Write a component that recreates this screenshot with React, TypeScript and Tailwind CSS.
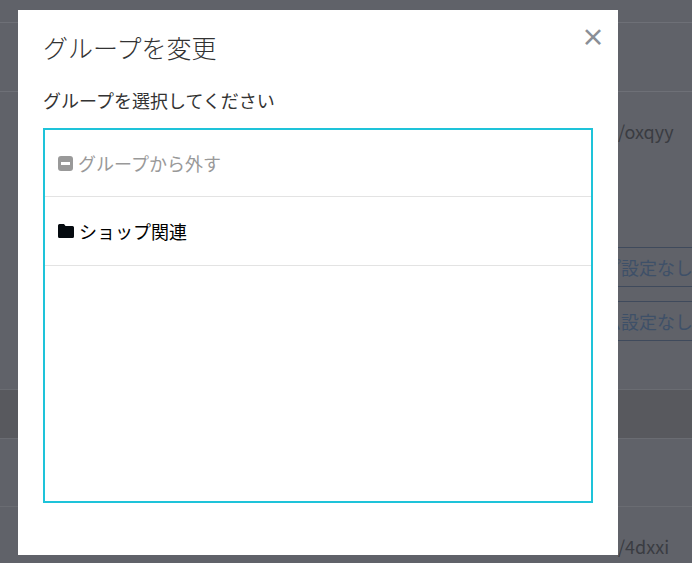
import React from "react";

export default function App() {
  const font = { fontFamily: '"Noto Sans CJK JP","Noto Sans",sans-serif' };
  return (
    <div className="relative w-[692px] h-[563px] overflow-hidden bg-[#606269]" style={font}>
      {/* background page (dimmed) */}
      <div className="flex flex-col text-[#3a3d45]">
        <div className="h-[23px] border-b border-[#6e7077]" />
        <div className="h-[69px] border-b border-[#6e7077]" />
        <div className="h-[135px] pl-[618px] pt-[26px] text-[18px] text-[#3a3c42]">/oxqyy</div>
        <div className="h-[162px] flex flex-col items-end gap-[14px] pt-[20px]">
          <div className="w-[92px] h-[40px] border border-[#3f4a5c] border-r-0 flex items-center pl-[2px] text-[18px] text-[#3e5068] whitespace-nowrap overflow-hidden">プ設定なし</div>
          <div className="w-[92px] h-[40px] border border-[#3f4a5c] border-r-0 flex items-center pl-[2px] text-[18px] text-[#3e5068] whitespace-nowrap overflow-hidden">ム設定なし</div>
        </div>
        <div className="h-[50px] bg-[#58595e] border-y border-[#6a6c72]" />
        <div className="h-[68px] border-b border-[#6a6c72]" />
        <div className="pl-[618px] pt-[26px] text-[18px] text-[#3a3c42]">/4dxxi</div>
      </div>

      {/* modal */}
      <div className="absolute left-[18px] top-[10px] w-[600px] h-[545px] bg-white">
        <button className="absolute right-[13px] top-[14px] text-[#8a8f96] text-[24px] font-bold leading-none">×</button>
        <div className="px-[25px] pt-[20px]">
          <h2 className="text-[25px] text-[#333] leading-[34px] font-light">グループを変更</h2>
          <p className="mt-[24px] text-[18px] text-[#333] leading-[24px]">グループを選択してください</p>
          <div className="mt-[16px] h-[375px] border-2 border-[#1ec3d9] flex flex-col">
            <div className="h-[67px] flex items-center pl-[13px] gap-[5px] border-b border-[#e3e3e3] text-[18px] text-[#999]">
              <span className="w-[15px] h-[15px] rounded-[3px] bg-[#999] flex items-center justify-center">
                <span className="w-[9px] h-[3px] bg-white" />
              </span>
              グループから外す
            </div>
            <div className="h-[69px] flex items-center pl-[13px] gap-[5px] border-b border-[#e3e3e3] text-[18px] text-black">
              <svg width="16" height="14" viewBox="0 0 16 14"><path d="M0 1.5A1.5 1.5 0 0 1 1.5 0H6l1.5 2h7A1.5 1.5 0 0 1 16 3.5v9a1.5 1.5 0 0 1-1.5 1.5h-13A1.5 1.5 0 0 1 0 12.5z" fill="#050a0f" /></svg>
              ショップ関連
            </div>
          </div>
        </div>
      </div>
    </div>
  );
}
